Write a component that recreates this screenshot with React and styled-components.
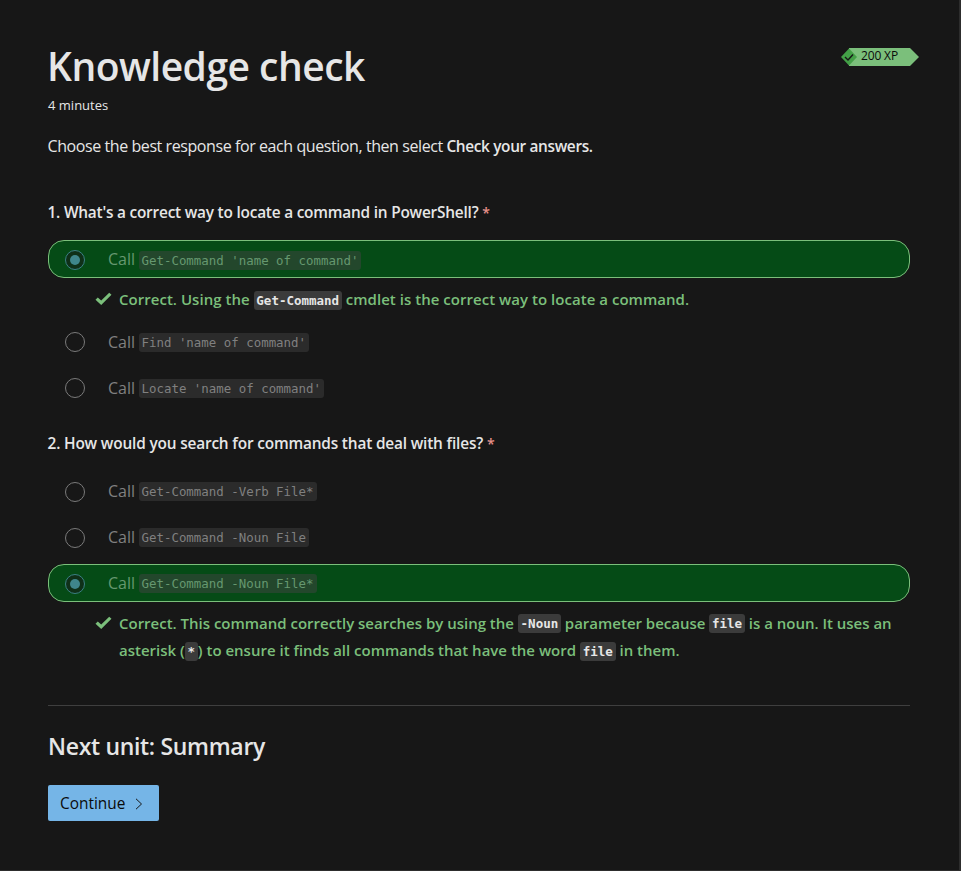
import React from "react";
import styled, { createGlobalStyle } from "styled-components";

const GlobalStyle = createGlobalStyle`
  * { box-sizing: border-box; }
  body {
    margin: 0;
    background: #171717;
    color: #e6e6e6;
    font-family: "Segoe UI", "Open Sans", "Noto Sans", sans-serif;
    font-size: 16px;
  }
  h1, h2, p { margin: 0; }
`;

const Page = styled.div`
  height: 871px;
  overflow: hidden;
  padding: 42px 49px 0 48px;
  border-right: 2px solid #2d2d2d;
  border-bottom: 1px solid #2d2d2d;
`;

const Header = styled.header`
  display: flex;
  justify-content: space-between;
  align-items: flex-start;
  height: 50px;
`;

const Title = styled.h1`
  margin-left: -1px;
  font-size: 39px;
  line-height: 48px;
  font-weight: 600;
  letter-spacing: -0.5px;
  white-space: nowrap;
`;

const Badge = styled.div`
  position: relative;
  display: flex;
  width: 78px;
  height: 18px;
  margin: 6px -9px 0 0;
  padding-left: 20px;
  color: #0b0b0b;
  font-size: 12px;
  line-height: 16px;
  letter-spacing: -0.15px;
  white-space: nowrap;
`;

const BadgeShape = styled.svg`
  position: absolute;
  inset: 0;
`;

const BadgeText = styled.span`
  position: relative;
`;

const Duration = styled.p`
  height: 26px;
  font-size: 13px;
  line-height: 26px;
`;

const Intro = styled.p`
  height: 24px;
  margin: 16px 0 0 -0.5px;
  line-height: 24px;
  letter-spacing: -0.42px;
  white-space: nowrap;
  b {
    font-size: 15.4px;
    font-weight: 600;
    letter-spacing: -0.35px;
  }
`;

const Question = styled.section`
  margin-top: ${(p) => p.$gap}px;
`;

const Prompt = styled.p`
  height: 24px;
  margin: 0 0 ${(p) => p.$space}px -0.5px;
  font-size: 15.4px;
  font-weight: 600;
  line-height: 26px;
  letter-spacing: ${(p) => p.$tracking}px;
  white-space: nowrap;
`;

const Required = styled.span`
  color: #e8918b;
  font-size: 14px;
`;

const Options = styled.div`
  display: flex;
  flex-direction: column;
  gap: 8px;
`;

const Option = styled.div`
  display: flex;
  align-items: center;
  height: 38px;
  padding-left: 16px;
  border: 1px solid ${(p) => (p.$correct ? "#7bbf7b" : "transparent")};
  border-radius: 16px;
  background: ${(p) => (p.$correct ? "#054b16" : "transparent")};
  color: ${(p) => (p.$correct ? "#669870" : "#808080")};
`;

const Radio = styled.span`
  display: grid;
  place-items: center;
  width: 20px;
  height: 20px;
  margin: ${(p) => (p.$low ? 2 : 0)}px 23px 0 0;
  border: 1px solid ${(p) => (p.$checked ? "#3b8084" : "#7a7a7a")};
  border-radius: 50%;
  background: ${(p) => (p.$checked ? "#0f3018" : "transparent")};
  &::after {
    content: "";
    width: 10px;
    height: 10px;
    border-radius: 50%;
    background: ${(p) => (p.$checked ? "#3f868b" : "transparent")};
  }
`;

const Label = styled.span`
  width: 31px;
  line-height: 24px;
  white-space: nowrap;
`;

const Code = styled.code`
  display: inline-block;
  height: 19px;
  margin-top: ${(p) => (p.$low ? 2 : 0)}px;
  padding: 0 3px 0 2.5px;
  border-radius: 3px;
  background: ${(p) => (p.$correct ? "#23472c" : "#2b2b2b")};
  font: 12.43px/19px "DejaVu Sans Mono", monospace;
  white-space: pre;
`;

const Feedback = styled.div`
  display: flex;
  margin: 8px 0 10px 47px;
  color: #7bbf7b;
  font-size: 15px;
  font-weight: 600;
  line-height: 27px;
`;

const CheckIcon = styled.svg`
  flex: none;
  width: 17px;
  height: 14px;
  margin: 6px 7px 0 0;
`;

const FeedbackLine = styled.div`
  display: flex;
  align-items: center;
  height: 27px;
  white-space: pre;
  letter-spacing: ${(p) => p.$tracking || 0}px;
`;

const Term = styled(Code)`
  padding: 0 2.75px;
  background: #3b3b3b;
  color: #e6e6e6;
  font-size: 12.5px;
  font-weight: 700;
  letter-spacing: 0;
`;

const Divider = styled.hr`
  height: 1px;
  margin: 41px 0 0;
  border: 0;
  background: #3f3f3f;
`;

const NextUnit = styled.h2`
  height: 32px;
  margin-top: 24px;
  font-size: 23px;
  line-height: 32px;
  font-weight: 600;
  letter-spacing: -0.32px;
  white-space: nowrap;
`;

const Continue = styled.button`
  display: flex;
  align-items: center;
  justify-content: space-between;
  width: 111px;
  height: 36px;
  margin-top: 23px;
  padding: 1px 16px 0 12px;
  border: 0;
  border-radius: 2px;
  background: #75b5e7;
  color: #0b0b0b;
  font: 500 15.4px/24px "Open Sans", sans-serif;
`;

function Check() {
  return (
    <CheckIcon viewBox="0 0 17 14" aria-hidden="true">
      <path d="M0.5 7.8 L2.8 5.5 L6.2 8.5 L14.2 0.8 L16.5 2.8 L6.2 13 Z" fill="#7bbf7b" />
    </CheckIcon>
  );
}

function Choice({ code, correct, lowRadio, lowCode }) {
  return (
    <Option $correct={correct}>
      <Radio $checked={correct} $low={lowRadio} role="radio" aria-checked={!!correct} />
      <Label>Call</Label>
      <Code $correct={correct} $low={lowCode}>{code}</Code>
    </Option>
  );
}

export default function App() {
  return (
    <>
      <GlobalStyle />
      <Page>
        <Header>
          <Title>Knowledge check</Title>
          <Badge>
            <BadgeShape width="78" height="18" viewBox="0 0 78 18" aria-hidden="true">
              <path d="M8 0H69L78 9L69 18H8Z" fill="#7bbf7b" />
              <path d="M0 9L8 0.5L16 9L8 17.5Z" fill="#43a047" />
              <path d="M4 9L7 12L12 6.5" fill="none" stroke="#171717" strokeWidth="1.4" />
            </BadgeShape>
            <BadgeText>200 XP</BadgeText>
          </Badge>
        </Header>
        <Duration>4 minutes</Duration>
        <Intro>
          Choose the best response for each question, then select <b>Check your answers.</b>
        </Intro>

        <Question $gap={42}>
          <Prompt $space={16} $tracking={-0.21}>
            1. What's a correct way to locate a command in PowerShell? <Required>*</Required>
          </Prompt>
          <Options>
            <Choice correct lowRadio lowCode code="Get-Command 'name of command'" />
          </Options>
          <Feedback>
            <Check />
            <FeedbackLine $tracking={0.03}>
              <span>Correct. Using the </span>
              <Term $low>Get-Command</Term>
              <span> cmdlet is the correct way to locate a command.</span>
            </FeedbackLine>
          </Feedback>
          <Options>
            <Choice code="Find 'name of command'" />
            <Choice code="Locate 'name of command'" />
          </Options>
        </Question>

        <Question $gap={24}>
          <Prompt $space={17} $tracking={-0.17}>
            2. How would you search for commands that deal with files? <Required>*</Required>
          </Prompt>
          <Options>
            <Choice lowRadio code="Get-Command -Verb File*" />
            <Choice lowRadio code="Get-Command -Noun File" />
            <Choice correct lowRadio code="Get-Command -Noun File*" />
          </Options>
          <Feedback>
            <Check />
            <div>
              <FeedbackLine $tracking={-0.01}>
                <span>Correct. This command correctly searches by using the </span>
                <Term>-Noun</Term>
                <span> parameter because </span>
                <Term>file</Term>
                <span> is a noun. It uses an</span>
              </FeedbackLine>
              <FeedbackLine>
                <span>asterisk (</span>
                <Term $low>*</Term>
                <span>) to ensure it finds all commands that have the word </span>
                <Term $low>file</Term>
                <span> in them.</span>
              </FeedbackLine>
            </div>
          </Feedback>
        </Question>

        <Divider />
        <NextUnit>Next unit: Summary</NextUnit>
        <Continue>
          Continue
          <svg width="8" height="12" viewBox="0 0 8 12" fill="none" stroke="#171717" aria-hidden="true">
            <path d="M1 0.8L6.5 6L1 11.2" />
          </svg>
        </Continue>
      </Page>
    </>
  );
}
